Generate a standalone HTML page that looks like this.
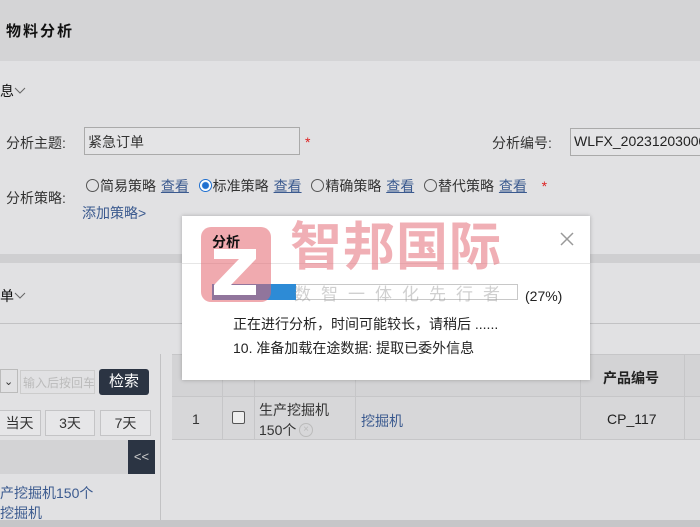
<!DOCTYPE html>
<html><head><meta charset="utf-8"><style>
*{margin:0;padding:0;box-sizing:border-box}
body{width:700px;height:527px;overflow:hidden;background:#e1e1e3;font-family:"Liberation Sans","Noto Sans CJK SC",sans-serif;font-size:14px;color:#333;position:relative}
.a{position:absolute}
.lnk{color:#3b5a8f}
.u{text-decoration:underline;color:#3b5a8f}
.btn{position:absolute;border:1px solid #c4c4c6;background:#e6e6e8;text-align:center;font-size:14px;line-height:24px}
.radio{display:inline-block;width:13px;height:13px;border:1px solid #555;border-radius:50%;vertical-align:-1px;margin-right:1px}
</style></head><body>
<div class="a" style="left:0;top:0;width:700px;height:61px;background:#d4d4d6"></div>
<div class="a" style="left:6px;top:20px;font-weight:bold;font-size:15px;letter-spacing:2px;color:#111">物料分析</div>
<div class="a" style="left:0;top:81px;font-size:14px;color:#111">息</div>
<svg class="a" style="left:14px;top:87px" width="12" height="8"><path d="M1 1 L6 6 L11 1" stroke="#666" fill="none"/></svg>
<div class="a" style="left:6px;top:133px">分析主题:</div>
<div class="a" style="left:84px;top:127px;width:216px;height:28px;border:1px solid #aaa;background:#e4e4e6;padding:4px 3px">紧急订单</div>
<div class="a" style="left:305px;top:134px;color:#d22">*</div>
<div class="a" style="left:492px;top:133px">分析编号:</div>
<div class="a" style="left:570px;top:128px;width:140px;height:28px;border:1px solid #aaa;background:#e4e4e6;padding:4px 3px;white-space:nowrap;color:#222">WLFX_20231203000</div>
<div class="a" style="left:6px;top:188px">分析策略:</div>
<div class="a" style="left:86px;top:176px;white-space:nowrap;word-spacing:1px"><span class="radio"></span>简易策略 <span class="u">查看</span>&nbsp; <span class="radio" style="border-color:#1e6fd0;background:radial-gradient(#1e6fd0 3px,#fff 4px)"></span>标准策略 <span class="u">查看</span>&nbsp; <span class="radio"></span>精确策略 <span class="u">查看</span>&nbsp; <span class="radio"></span>替代策略 <span class="u">查看</span> &nbsp;&nbsp;<span style="color:#d22">*</span></div>
<div class="a lnk" style="left:82px;top:203px">添加策略&gt;</div>
<div class="a" style="left:0;top:254px;width:700px;height:9px;background:#cfcfd1"></div>
<div class="a" style="left:0;top:286px;color:#111">单</div>
<svg class="a" style="left:14px;top:292px" width="12" height="8"><path d="M1 1 L6 6 L11 1" stroke="#666" fill="none"/></svg>
<div class="a" style="left:0;top:323px;width:700px;height:1px;background:#c2c2c4"></div>
<div class="a" style="left:160px;top:354px;width:1px;height:166px;background:#c2c2c4"></div>
<div class="a" style="left:0;top:369px;width:18px;height:24px;border:1px solid #bbb;font-size:11px;padding:5px 3px">⌄</div>
<div class="a" style="left:20px;top:370px;width:75px;height:24px;border:1px solid #ccc;font-size:12px;color:#bbb;padding:3px 2px;white-space:nowrap;overflow:hidden">输入后按回车</div>
<div class="a" style="left:99px;top:369px;width:50px;height:26px;background:#2b3443;color:#fff;border-radius:3px;text-align:center;line-height:26px;font-size:15px">检索</div>
<div class="btn" style="left:-2px;top:410px;width:43px;height:26px">当天</div>
<div class="btn" style="left:45px;top:410px;width:50px;height:26px">3天</div>
<div class="btn" style="left:100px;top:410px;width:51px;height:26px">7天</div>
<div class="a" style="left:0;top:440px;width:155px;height:34px;background:#d3d3d5"></div>
<div class="a" style="left:128px;top:440px;width:27px;height:34px;background:#2b3443;color:#ccc;text-align:center;line-height:34px;font-size:13px">&lt;&lt;</div>
<div class="a lnk" style="left:0;top:483px">产挖掘机150个</div>
<div class="a lnk" style="left:0;top:503px">挖掘机</div>
<div class="a" style="left:172px;top:354px;width:528px;height:86px;border-top:1px solid #c6c6c8;border-left:1px solid #c6c6c8"></div>
<div class="a" style="left:172px;top:355px;width:528px;height:42px;background:#d3d3d5;border-bottom:1px solid #c6c6c8"></div>
<div class="a" style="left:172px;top:397px;width:528px;height:43px;background:#d7d7d9;border-bottom:1px solid #c6c6c8"></div>
<div class="a" style="left:222px;top:355px;width:1px;height:85px;background:#c6c6c8"></div>
<div class="a" style="left:254px;top:355px;width:1px;height:85px;background:#c6c6c8"></div>
<div class="a" style="left:355px;top:355px;width:1px;height:85px;background:#c6c6c8"></div>
<div class="a" style="left:580px;top:355px;width:1px;height:85px;background:#c6c6c8"></div>
<div class="a" style="left:684px;top:355px;width:1px;height:85px;background:#c6c6c8"></div>
<div class="a" style="left:603px;top:368px;font-weight:bold;color:#222">产品编号</div>
<div class="a" style="left:192px;top:411px">1</div>
<div class="a" style="left:232px;top:411px;width:13px;height:13px;border:1px solid #555;border-radius:2px;background:#eee"></div>
<div class="a" style="left:259px;top:400px;line-height:20px">生产挖掘机<br>150个</div>
<div class="a" style="left:299px;top:423px;width:14px;height:14px;border:1px solid #bbb;border-radius:50%;color:#bbb;font-size:10px;line-height:12px;text-align:center">×</div>
<div class="a lnk" style="left:361px;top:411px">挖掘机</div>
<div class="a" style="left:607px;top:411px;color:#222">CP_117</div>
<div class="a" style="left:0;top:520px;width:700px;height:7px;background:#c6c6c8"></div>
<div class="a" style="left:182px;top:216px;width:408px;height:164px;background:#fff;box-shadow:0 0 4px rgba(0,0,0,.25)"></div>
<div class="a" style="left:182px;top:263px;width:408px;height:1px;background:#e6e6e6"></div>
<div class="a" style="left:212px;top:284px;width:306px;height:16px;border:1px solid #c8c8c8"></div>
<div class="a" style="left:212px;top:284px;width:84px;height:16px;background:#2d8bd6"></div>
<div class="a" style="left:201px;top:227px;width:70px;height:75px;background:rgba(228,100,110,.55);border-radius:10px"></div>
<svg class="a" style="left:201px;top:227px" width="70" height="75"><path d="M13 22 H55 V32 L30 58 H55 V68 H13 V58 L38 32 H13 Z" fill="#fff"/></svg>
<div class="a" style="left:212px;top:232px;font-weight:bold;color:#111;font-size:14px">分析</div>
<div class="a" style="left:290px;top:218px;font-size:52px;font-weight:bold;color:rgba(228,110,120,.55);letter-spacing:1px;line-height:60px">智邦国际</div>
<div class="a" style="left:294px;top:280px;font-size:17px;color:rgba(150,150,150,.45);letter-spacing:10px;white-space:nowrap">数智一体化先行者</div>
<svg class="a" style="left:560px;top:232px" width="14" height="14"><path d="M1 1 L13 13 M13 1 L1 13" stroke="#999" stroke-width="1.5"/></svg>
<div class="a" style="left:525px;top:288px;color:#222">(27%)</div>
<div class="a" style="left:233px;top:314px;color:#222">正在进行分析，时间可能较长，请稍后 ......</div>
<div class="a" style="left:233px;top:338px;color:#222">10. 准备加载在途数据: 提取已委外信息</div>
</body></html>
